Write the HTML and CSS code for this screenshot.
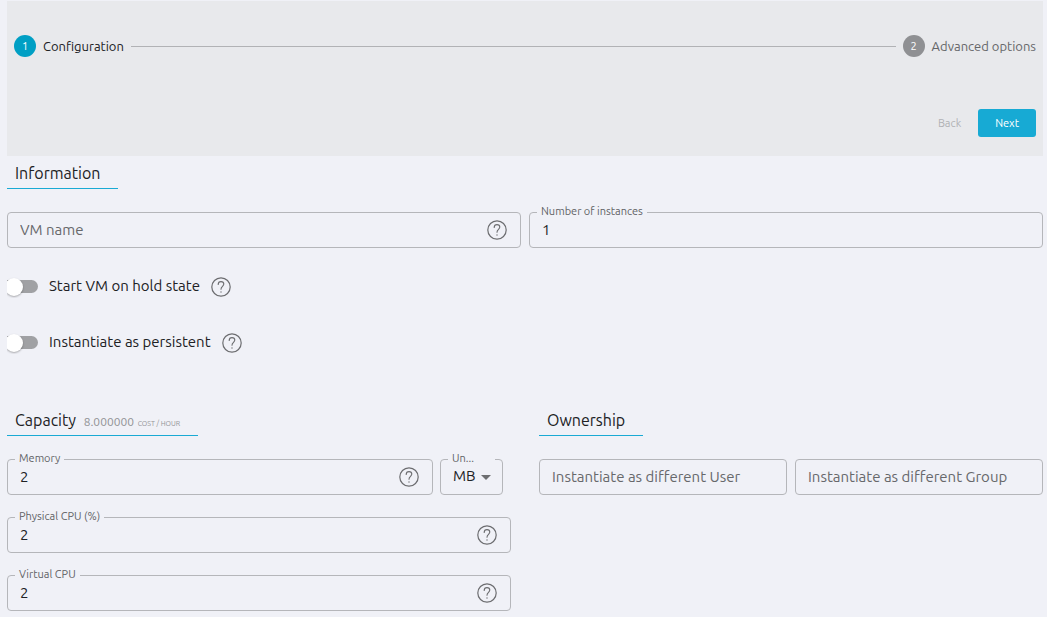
FILE: index.html
```html
<!DOCTYPE html>
<html lang="en">
<head>
<meta charset="utf-8">
<meta name="viewport" content="width=device-width, initial-scale=1">
<title>Instantiate VM</title>
<link rel="stylesheet" href="styles.css">
</head>
<body>
<svg class="defs" aria-hidden="true">
  <symbol id="help" viewBox="0 0 20 20">
    <circle cx="10" cy="10" r="9.2" fill="none" stroke="currentColor" stroke-width="1.2"/>
    <path d="M7.2 7.4C7.2 5.6 8.4 4.6 10 4.6C11.6 4.6 12.8 5.6 12.8 7.1C12.8 9.4 10 9.3 10 12.3" fill="none" stroke="currentColor" stroke-width="1.1" stroke-linecap="round"/>
    <circle cx="10" cy="15" r=".7" fill="currentColor"/>
  </symbol>
</svg>
<main class="page">
  <header class="wizard">
    <ol class="steps">
      <li class="step step-active"><span class="step-number">1</span>Configuration</li>
      <li class="step-line" aria-hidden="true"></li>
      <li class="step"><span class="step-number">2</span>Advanced options</li>
    </ol>
    <div class="actions">
      <button class="button" type="button" disabled>Back</button>
      <button class="button button-primary" type="button">Next</button>
    </div>
  </header>

  <form class="form">
    <section class="section">
      <h2 class="legend">Information</h2>
      <div class="row">
        <div class="field">
          <input class="input" type="text" placeholder="VM name" aria-label="VM name">
          <button class="help" type="button" aria-label="Help"><svg class="help-icon"><use href="#help"/></svg></button>
        </div>
        <div class="field">
          <label class="label" for="instances">Number of instances</label>
          <input class="input" id="instances" type="text" inputmode="numeric" value="1">
        </div>
      </div>
      <div class="toggles">
        <div class="toggle">
          <input class="switch" id="hold" type="checkbox" role="switch">
          <label class="toggle-label" for="hold">Start VM on hold state</label>
          <button class="help" type="button" aria-label="Help"><svg class="help-icon"><use href="#help"/></svg></button>
        </div>
        <div class="toggle">
          <input class="switch" id="persistent" type="checkbox" role="switch">
          <label class="toggle-label" for="persistent">Instantiate as persistent</label>
          <button class="help" type="button" aria-label="Help"><svg class="help-icon"><use href="#help"/></svg></button>
        </div>
      </div>
    </section>

    <div class="columns">
      <section class="section">
        <h2 class="legend">Capacity <span class="cost">8.000000</span> <span class="cost-unit">COST / HOUR</span></h2>
        <div class="stack">
          <div class="row memory">
            <div class="field">
              <label class="label" for="memory">Memory</label>
              <input class="input" id="memory" type="text" inputmode="numeric" value="2">
              <button class="help" type="button" aria-label="Help"><svg class="help-icon"><use href="#help"/></svg></button>
            </div>
            <div class="field field-unit">
              <label class="label label-unit" for="unit">Un...</label>
              <select class="input select" id="unit"><option>MB</option><option>GB</option><option>TB</option></select>
              <svg class="arrow" viewBox="0 0 10 5" aria-hidden="true"><path d="M0 0h10L5 5z" fill="currentColor"/></svg>
            </div>
          </div>
          <div class="field">
            <label class="label" for="pcpu">Physical CPU (%)</label>
            <input class="input" id="pcpu" type="text" inputmode="numeric" value="2">
            <button class="help" type="button" aria-label="Help"><svg class="help-icon"><use href="#help"/></svg></button>
          </div>
          <div class="field">
            <label class="label" for="vcpu">Virtual CPU</label>
            <input class="input" id="vcpu" type="text" inputmode="numeric" value="2">
            <button class="help" type="button" aria-label="Help"><svg class="help-icon"><use href="#help"/></svg></button>
          </div>
        </div>
      </section>
      <section class="section">
        <h2 class="legend">Ownership</h2>
        <div class="row">
          <div class="field"><input class="input" type="text" placeholder="Instantiate as different User" aria-label="Instantiate as different User"></div>
          <div class="field"><input class="input" type="text" placeholder="Instantiate as different Group" aria-label="Instantiate as different Group"></div>
        </div>
      </section>
    </div>
  </form>
</main>
</body>
</html>
```
FILE: styles.css
```css
* { box-sizing: border-box; }

body {
  margin: 0;
  background: #f0f1f7;
  color: #202124;
  font: 15px/20px Ubuntu, "Noto Sans", sans-serif;
}

.defs { position: absolute; width: 0; height: 0; }

.page { padding: 1px 4px 7px 7px; }

.wizard {
  padding: 34px 7px 19px;
  background: #e8e9ec;
}

.steps {
  display: flex;
  align-items: center;
  gap: 7px;
  margin: 0 0 52px;
  padding: 0;
  list-style: none;
  font-size: 13px;
}

.step {
  display: flex;
  align-items: center;
  gap: 7px;
  color: #66676a;
}

.step-active { color: #202124; }

.step-number {
  width: 22px;
  height: 22px;
  border-radius: 50%;
  background: #8f9093;
  color: #fff;
  font-size: 11px;
  line-height: 22px;
  text-align: center;
}

.step-active .step-number { background: #009fc4; }

.step-line { flex: 1; height: 1px; background: #b1b2b5; }

.actions { display: flex; justify-content: flex-end; }

.button {
  height: 28px;
  padding: 0 17px;
  border: 0;
  border-radius: 3px;
  background: none;
  color: #1ba9d3;
  font: inherit;
  font-size: 11px;
}

.button:disabled { color: #b0b1b4; }

.button-primary { background: #17aad4; color: #fff; }

.legend {
  width: fit-content;
  margin: 0 0 23px;
  border-bottom: 1px solid #1aaad4;
  padding: 5px 18px 3px 8px;
  font-size: 16px;
  font-weight: 400;
  line-height: 24px;
}

.cost { margin-left: 4px; color: #929396; font-size: 12px; line-height: 1; }

.cost-unit { color: #929396; font-size: 7px; line-height: 1; }

.row { display: flex; gap: 8px; }

.field {
  position: relative;
  display: flex;
  align-items: center;
  flex: 1;
  min-width: 0;
  height: 36px;
  border: 1px solid #b5b6ba;
  border-radius: 4px;
}

.input {
  flex: 1;
  width: 100%;
  min-width: 0;
  height: 34px;
  padding: 0 12px 2px;
  border: 0;
  background: none;
  color: inherit;
  font: inherit;
}

.input::placeholder { color: #67686b; opacity: 1; }

.label {
  position: absolute;
  top: -10px;
  left: 7px;
  padding: 0 4px;
  background: #f0f1f7;
  color: #626366;
  font-size: 11px;
  line-height: 16px;
}

.help {
  display: flex;
  padding: 0;
  border: 0;
  background: none;
  color: #6c6d70;
}

.field .help { margin-right: 13px; }

.help-icon { width: 20px; height: 20px; }

.toggles { display: grid; gap: 36px; margin: 29px 0 50px; }

.toggle { display: flex; align-items: center; }

.toggle-label { padding-bottom: 2px; line-height: 18px; }

.toggle .help { margin-left: 11px; }

.switch {
  position: relative;
  appearance: none;
  overflow: hidden;
  width: 31px;
  height: 22px;
  margin: -1px 11px -1px 0;
}

.switch::before {
  content: "";
  position: absolute;
  inset: 4px 0 5px -7px;
  border-radius: 7px;
  background: #a0a1a4;
}

.switch::after {
  content: "";
  position: absolute;
  top: 2px;
  left: -2px;
  width: 18px;
  height: 18px;
  border-radius: 50%;
  background: #fff;
  box-shadow: 0 1px 2px #0000004d;
}

.columns { display: grid; grid-template-columns: 1fr 1fr; gap: 28px; }

.stack { display: grid; gap: 22px; }

.memory { gap: 7px; padding-right: 8px; }

.field-unit { flex: 0 0 63px; }

.label-unit { width: 47px; }

.select { appearance: none; }

.arrow {
  position: absolute;
  right: 11px;
  width: 10px;
  height: 5px;
  color: #6d6e71;
  pointer-events: none;
}
```
